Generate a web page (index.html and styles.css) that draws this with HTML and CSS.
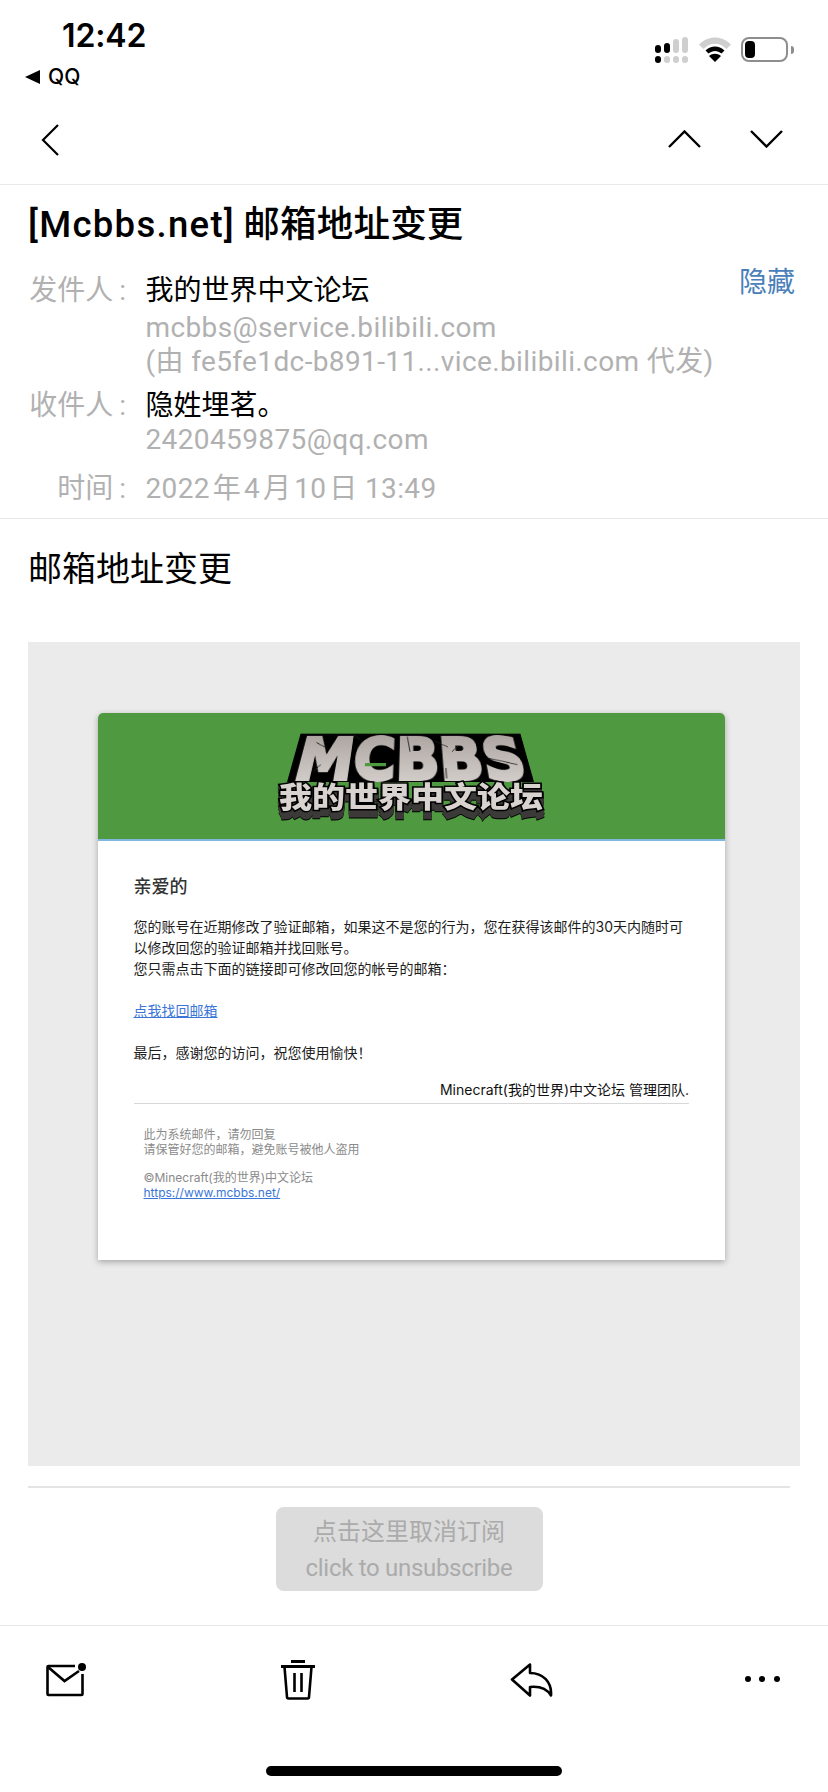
FILE: index.html
```html
<!DOCTYPE html>
<html lang="zh-CN">
<head>
<meta charset="utf-8">
<title>邮箱地址变更</title>
<link rel="stylesheet" href="styles.css">
</head>
<body>
<div class="page">
  <header class="status">
    <div class="status-left">
      <div class="time">12:42</div>
      <div class="back-app"><svg class="tri" viewBox="0 0 15 14"><path d="M15 0v14L0 7z"/></svg><span>QQ</span></div>
    </div>
    <div class="status-right">
      <div class="signal">
        <i class="b on h1"></i><i class="b on h2"></i><i class="b h3"></i><i class="b h4"></i>
        <i class="d on"></i><i class="d"></i><i class="d"></i><i class="d"></i>
      </div>
      <svg class="wifi" viewBox="0 0 32 25">
        <path d="M0 7.500C9 -2 23 -2 32 7.500L27.500 12C21 5 11 5 4.500 12z" fill="#cfcfcf"/>
        <path d="M6.500 13.500C12 8 20 8 25.500 13.500L22.500 16.500C18.500 13 13.500 13 9.500 16.500z" fill="#000"/>
        <path d="M16 25L10 19C13.500 16 18.500 16 22 19z" fill="#000"/>
      </svg>
      <div class="battery"><div class="battery-shell"><i></i></div><b></b></div>
    </div>
  </header>

  <nav class="nav">
    <svg class="ico-back" viewBox="0 0 18 32"><path d="M17 1L2 16l15 15"/></svg>
    <div class="nav-arrows">
      <svg class="ico-ud" viewBox="0 0 33 18"><path d="M1 17L16.500 1.500 32 17"/></svg>
      <svg class="ico-ud" viewBox="0 0 33 18"><path d="M1 1l15.500 15.500L32 1"/></svg>
    </div>
  </nav>

  <section class="head">
    <h1 class="subject"><span class="subject-en">[Mcbbs.net]</span> 邮箱地址变更</h1>
    <div class="meta">
      <div class="row r-from">
        <div class="label">发件人<em>:</em></div>
        <div class="val">
          <div class="name">我的世界中文论坛</div>
          <div class="addr gap4">mcbbs@service.bilibili.com</div>
          <div class="addr">(由 fe5fe1dc-b891-11...vice.bilibili.com 代发)</div>
        </div>
        <a class="hide">隐藏</a>
      </div>
      <div class="row r-to">
        <div class="label">收件人<em>:</em></div>
        <div class="val">
          <div class="name">隐姓埋茗。</div>
          <div class="addr gap2">2420459875@qq.com</div>
        </div>
      </div>
      <div class="row r-time">
        <div class="label">时间<em>:</em></div>
        <div class="val"><div class="addr"><span class="date">2022 年 4 月 10 日</span> 13:49</div></div>
      </div>
    </div>
  </section>

  <main class="content">
    <h2 class="body-title">邮箱地址变更</h2>
    <div class="mail-bg">
      <article class="card">
        <div class="banner">
          <div class="logo">
            <div class="logo-top">
              <svg viewBox="0 0 247 60" class="logo-top-svg">
                <defs>
                  <linearGradient id="stone" x1="0" y1="0" x2="0" y2="1">
                    <stop offset="0" stop-color="#a59c98"/>
                    <stop offset="1" stop-color="#dbd7d3"/>
                  </linearGradient>
                </defs>
                <text class="logo-mc" x="4" y="57" textLength="239" lengthAdjust="spacingAndGlyphs">MCBBS</text>
                <path class="crack" d="M20 12l10 6M60 2l8 6M120 4l3 20M150 10l14 8M168 24l8-8M205 32l30 8M160 44v12M30 40l-6 8"/>
                <rect x="76" y="38" width="22" height="4" fill="#4f9a41"/>
              </svg>
            </div>
            <svg class="logo-bottom" viewBox="0 0 268 40"><text x="2" y="26" textLength="264" lengthAdjust="spacingAndGlyphs">我的世界中文论坛</text></svg>
          </div>
        </div>
        <div class="card-body">
          <h3 class="dear">亲爱的</h3>
          <p class="para">您的账号在近期修改了验证邮箱，如果这不是您的行为，您在获得该邮件的30天内随时可以修改回您的验证邮箱并找回账号。<br>您只需点击下面的链接即可修改回您的帐号的邮箱：<br><br><a class="link" href="#">点我找回邮箱</a><br><br>最后，感谢您的访问，祝您使用愉快！</p>
          <p class="sign">Minecraft(我的世界)中文论坛 管理团队.</p>
          <div class="foot">
            <p>此为系统邮件，请勿回复<br>请保管好您的邮箱，避免账号被他人盗用</p>
            <p class="foot-2">©Minecraft(我的世界)中文论坛<br><a class="link" href="#">https://www.mcbbs.net/</a></p>
          </div>
        </div>
      </article>
    </div>
    <div class="rule"></div>
    <div class="unsub-wrap">
      <a class="unsub"><span>点击这里取消订阅</span><span class="unsub-en">click to unsubscribe</span></a>
    </div>
  </main>

  <footer class="toolbar">
    <div class="tools">
      <svg class="t-mail" viewBox="0 0 40 34">
        <path class="ln" d="M29 3H2.500a1 1 0 0 0-1 1v27a1 1 0 0 0 1 1h33a1 1 0 0 0 1-1V11"/>
        <path class="ln" d="M2 4l16.500 14L33 8"/>
        <circle cx="36" cy="4" r="4"/>
      </svg>
      <svg class="t-trash" viewBox="0 0 36 40">
        <path d="M11 0h14v3H11zM1 5h34v3H1z"/>
        <path class="ln" d="M4.500 7l2.500 30a1.500 1.500 0 0 0 1.500 1.500h19a1.500 1.500 0 0 0 1.500-1.500l2.500-30M14.500 13v19M21.500 13v19"/>
      </svg>
      <svg class="t-reply" viewBox="0 0 43 34">
        <path class="ln" d="M20 1.500L2 16.500 20 32.500V24C30 23 37 26 41 32.500 42 19 33 10 20 10z" stroke-linejoin="round"/>
      </svg>
      <div class="dots"><i></i><i></i><i></i></div>
    </div>
    <div class="home-wrap"><div class="home"></div></div>
  </footer>
</div>
</body>
</html>
```

FILE: styles.css
```css
* { box-sizing: border-box; }
html, body { margin: 0; padding: 0; background: #fff; }
body { font-family: Roboto, "Noto Sans CJK SC", sans-serif; color: #000; }
.page { width: 828px; height: 1792px; display: flex; flex-direction: column; overflow: hidden; }

/* status bar */
.status { height: 100px; display: flex; justify-content: space-between; padding: 0 34px 0 25px; }
.status-left { padding-top: 17px; }
.time { font: 600 32px/38px Inter, sans-serif; margin-left: 37px; letter-spacing: -.1px; }
.back-app { display: flex; align-items: center; gap: 8px; margin-top: 9px; font: 500 21px/26px Inter, sans-serif; }
.tri { width: 15px; height: 14px; fill: #000; }
.status-right { display: flex; align-items: flex-start; padding-top: 37px; }
.signal { width: 33px; height: 26px; display: grid; grid-template-columns: repeat(4, 6px); grid-template-rows: 16px 7px; column-gap: 3px; row-gap: 3px; align-items: end; }
.signal i { display: block; border-radius: 3px; background: #cfcfcf; }
.signal .on { background: #000; }
.signal .d { height: 7px; }
.h1 { height: 8px; } .h2 { height: 10px; } .h3 { height: 14px; } .h4 { height: 16px; }
.wifi { width: 32px; height: 25px; margin-left: 11px; }
.battery { display: flex; align-items: center; margin-left: 10px; height: 25px; }
.battery-shell { width: 47px; height: 25px; border: 2px solid #8e8e8e; border-radius: 8px; padding: 2px; }
.battery-shell i { display: block; width: 10px; height: 17px; background: #000; border-radius: 4px; }
.battery b { width: 3px; height: 8px; margin-left: 3px; background: #8e8e8e; border-radius: 0 3px 3px 0; }

/* nav */
.nav { height: 85px; border-bottom: 1px solid #e8e8e8; display: flex; justify-content: space-between; align-items: flex-start; padding: 24px 45px 0 41px; }
.ico-back { width: 18px; height: 32px; fill: none; stroke: #000; stroke-width: 2.2px; }
.nav-arrows { display: flex; gap: 49px; padding-top: 6px; }
.ico-ud { width: 33px; height: 18px; fill: none; stroke: #000; stroke-width: 2.4px; }

/* head */
.head { height: 334px; border-bottom: 1px solid #e8e8e8; padding-top: 18px; }
.subject { margin: 0; padding-left: 28px; font: 500 36.500px/44px Roboto, "Noto Sans CJK SC", sans-serif; letter-spacing: .2px; word-spacing: -1px; }
.subject-en { letter-spacing: 1.3px; }
.meta { margin-top: 27px; padding-right: 33px; }
.row { display: flex; font-size: 28px; line-height: 34px; }
.label { width: 145.500px; flex: none; text-align: right; padding-right: 19.500px; color: #b1b1b1; }
.label em { font-style: normal; padding-left: 6px; }
.val { flex: 1; min-width: 0; }
.name { color: #000; }
.addr { color: #b1b1b1; white-space: nowrap; letter-spacing: .38px; }
.date { word-spacing: -4.500px; }
.gap4 { margin-top: 3px; }
.gap2 { margin-top: 0; }
.r-to { margin-top: 10px; }
.r-time { margin-top: 15px; }
.hide { color: #4a80b9; margin-top: -8px; flex: none; }

/* content */
.content { flex: 1; min-height: 0; }
.body-title { margin: 0; padding: 27px 0 0 28px; height: 123px; font: 400 34px/42px "Noto Sans CJK SC", sans-serif; }
.mail-bg { margin: 0 28px; height: 824px; background: #ebebeb; padding: 71px 75px 0 69.500px; }
.card { height: 547px; background: #fff; border-radius: 5px 5px 0 0; box-shadow: 0 2px 6px rgba(0, 0, 0, .3); font-family: Inter, "Noto Sans CJK SC", sans-serif; }
.banner { height: 128px; background: #4f9a41; border-bottom: 2px solid #7fb9df; border-radius: 5px 5px 0 0; display: flex; justify-content: center; padding-top: 20px; }

/* logo */
.logo { position: relative; width: 268px; height: 87px; }
.logo-top { position: absolute; left: 10px; top: -11px; width: 247px; height: 60px; background: #000; transform-origin: 50% 100%; transform: perspective(205px) rotateX(25deg); }
.logo-top-svg { display: block; width: 247px; height: 60px; overflow: visible; }
.logo-mc { font: 700 72px "DejaVu Sans", sans-serif; fill: url(#stone); stroke: url(#stone); stroke-width: 4px; stroke-linejoin: miter; }
.crack { fill: none; stroke: #222; stroke-width: 1px; }
.logo-bottom { position: absolute; left: 0; top: 49px; width: 268px; height: 40px; overflow: visible; filter: drop-shadow(0 4px 0 #3b3a38) drop-shadow(0 3px 0 #3b3a38) drop-shadow(0 1px 0 #000); }
.logo-bottom text { font: 900 29px "Noto Sans CJK SC", sans-serif; fill: #d8d3cf; stroke: #000; stroke-width: 3px; paint-order: stroke; }

.card-body { padding: 34px 36px 0; font-size: 14px; line-height: 21px; color: #1c1c1c; }
.dear { margin: 0; font: 500 18px/24px Inter, "Noto Sans CJK SC", sans-serif; color: #333; }
.para { margin: 16.500px 0 0; }
.link { color: #3a76d8; text-decoration: underline; }
.sign { margin: 16px 0 0; text-align: right; color: #111; height: 25px; border-bottom: 1px solid #d8d8d8; }
.foot { padding: 23px 0 0 10px; font-size: 12px; line-height: 15.500px; color: #8a8a8a; }
.foot p { margin: 0; }
.foot .foot-2 { margin-top: 12px; }

.rule { margin: 20px 38px 0 28px; height: 2px; background: #e4e4e4; }
.unsub-wrap { padding: 19px 0 0 275.500px; }
.unsub { width: 267px; height: 84px; background: #dcdcdc; border-radius: 8px; display: flex; flex-direction: column; align-items: center; padding-top: 8px; font-size: 24px; line-height: 35px; color: #ababab; }
.unsub-en { letter-spacing: -.3px; margin-top: 1px; }

/* toolbar */
.toolbar { height: 167px; border-top: 1px solid #e8e8e8; flex: none; }
.tools { height: 140px; display: flex; justify-content: space-between; align-items: flex-start; padding: 34px 48px 0 46px; }
.ln { fill: none; stroke: #000; stroke-width: 2.600px; }
.t-mail { width: 40px; height: 34px; margin-top: 3px; }
.t-trash { width: 36px; height: 40px; transform: translateX(1px); }
.t-reply { width: 43px; height: 34px; margin-top: 3px; transform: translateX(1px); }
.dots { display: flex; gap: 8.500px; padding-top: 16px; }
.dots i { width: 6px; height: 6px; border-radius: 50%; background: #000; }
.home-wrap { display: flex; justify-content: center; }
.home { width: 296px; height: 10px; border-radius: 5px; background: #000; }
```
